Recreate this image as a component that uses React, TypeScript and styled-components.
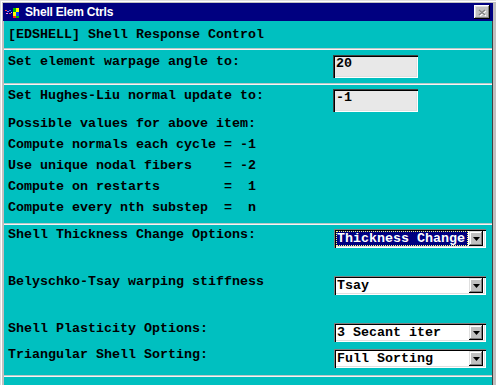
import React from 'react';
import styled, { createGlobalStyle } from 'styled-components';

const GlobalStyle = createGlobalStyle`
  html, body {
    margin: 0;
    padding: 0;
    background: #c0c0c0;
  }
  body {
    font-family: "Liberation Mono", monospace;
  }
`;

const Window = styled.div`
  width: 496px;
  height: 385px;
  box-sizing: border-box;
  padding: 3px 3px 0 3px;
  background: #c0c0c0;
  box-shadow: inset 1px 1px #dfdfdf, inset 2px 2px #ffffff;
  display: flex;
  flex-direction: column;
  overflow: hidden;
`;

const TitleBar = styled.div`
  height: 18px;
  flex: none;
  background: #000080;
  display: flex;
  align-items: center;
  padding-left: 2px;
  gap: 6px;
`;

const Title = styled.span`
  color: #ffffff;
  font: bold 12px "Liberation Sans", Arial, sans-serif;
  letter-spacing: -0.2px;
`;

const CloseButton = styled.div`
  margin-left: auto;
  margin-right: 3px;
  width: 16px;
  height: 14px;
  box-sizing: border-box;
  background: #c0c0c0;
  box-shadow: inset -1px -1px #000000, inset 1px 1px #ffffff,
    inset -2px -2px #808080, inset 2px 2px #dfdfdf;
  display: flex;
  align-items: center;
  justify-content: center;
`;

const Panel = styled.div`
  flex: 1;
  background: #00c0c0;
  color: #000000;
  border-left: 1px solid #c0c0c0;
  border-right: 1px solid #404040;
  display: flex;
  flex-direction: column;
`;

const Section = styled.div<{ $pt: number; $pb: number }>`
  padding: ${(p) => p.$pt}px 4px ${(p) => p.$pb}px 4px;
`;

const Divider = styled.div`
  flex: none;
  border-top: 1px solid #b8c8c8;
  border-bottom: 1px solid #f4f4f4;
`;

const Row = styled.div<{ $h: number }>`
  display: grid;
  grid-template-columns: 325px 1fr;
  align-items: start;
  height: ${(p) => p.$h}px;
`;

const Label = styled.div<{ $shift?: number }>`
  font: bold 13.33px/16px "Liberation Mono", monospace;
  white-space: pre;
  margin-top: ${(p) => p.$shift ?? 0}px;
`;

const InfoBlock = styled.div`
  padding-top: 1px;
`;

const InfoLine = styled.div`
  font: bold 13.33px/21px "Liberation Mono", monospace;
  white-space: pre;
`;

const TextBox = styled.div`
  width: 85px;
  height: 23px;
  box-sizing: border-box;
  padding: 3px 0 0 3px;
  background: #e8e8e8;
  box-shadow: inset 1px 1px #404040, inset 2px 2px #000000,
    inset -1px -1px #ffffff, inset -2px -2px #dfdfdf;
  font: bold 13.33px/12px "Liberation Mono", monospace;
`;

const Combo = styled.div`
  width: 152px;
  height: 19px;
  margin-left: 1px;
  box-sizing: border-box;
  padding: 2px;
  background: #ffffff;
  box-shadow: inset 1px 1px #808080, inset 2px 2px #000000,
    inset -1px -1px #ffffff, inset -2px -2px #dfdfdf;
  display: flex;
  align-items: stretch;
`;

const ComboText = styled.div<{ $selected?: boolean }>`
  flex: 1;
  margin: 0 1px 0 0;
  padding-left: 1px;
  font: bold 13.33px/15px "Liberation Mono", monospace;
  white-space: pre;
  overflow: hidden;
  color: ${(p) => (p.$selected ? '#ffffff' : '#000000')};
  background: ${(p) => (p.$selected ? '#000080' : 'transparent')};
  outline: ${(p) => (p.$selected ? '1px dotted #ffff80' : 'none')};
  outline-offset: -1px;
`;

const ArrowButton = styled.div`
  width: 14px;
  flex: none;
  margin-right: 1px;
  background: #c0c0c0;
  box-shadow: inset -1px -1px #000000, inset 1px 1px #dfdfdf,
    inset -2px -2px #808080, inset 2px 2px #ffffff;
  display: flex;
  align-items: center;
  justify-content: center;
`;

const Arrow = () => (
  <svg width="7" height="4" viewBox="0 0 7 4">
    <path d="M0 0h7L3.5 4z" fill="#000" />
  </svg>
);

const AppIcon = () => (
  <svg width="14" height="11" viewBox="0 0 14 11" shapeRendering="crispEdges">
    <rect x="0" y="3" width="2" height="1" fill="#ff4040" />
    <rect x="2" y="4" width="2" height="1" fill="#8080ff" />
    <rect x="1" y="6" width="2" height="1" fill="#ff80ff" />
    <rect x="4" y="3" width="2" height="1" fill="#4060ff" />
    <rect x="4" y="6" width="2" height="1" fill="#ff4040" />
    <rect x="6" y="5" width="1" height="1" fill="#c0c0ff" />
    <rect x="8" y="1" width="3" height="4" fill="#00c000" />
    <rect x="11" y="1" width="3" height="4" fill="#ffff00" />
    <rect x="8" y="5" width="3" height="4" fill="#ffff00" />
    <rect x="11" y="5" width="3" height="4" fill="#0040ff" />
    <rect x="8" y="9" width="3" height="2" fill="#ff2020" />
    <rect x="11" y="9" width="3" height="2" fill="#00c000" />
  </svg>
);

const CloseIcon = () => (
  <svg width="10" height="9" viewBox="0 0 10 9">
    <path d="M2 2l6 5M8 2l-6 5" stroke="#ffffff" strokeWidth="1.6" transform="translate(0.8 0.8)" />
    <path d="M2 2l6 5M8 2l-6 5" stroke="#808080" strokeWidth="1.6" />
  </svg>
);

interface ISelectProps {
  value: string;
  selected?: boolean;
}

function Select({ value, selected }: ISelectProps) {
  return (
    <Combo>
      <ComboText $selected={selected}>{value}</ComboText>
      <ArrowButton>
        <Arrow />
      </ArrowButton>
    </Combo>
  );
}

const info = [
  'Possible values for above item:',
  'Compute normals each cycle = -1',
  'Use unique nodal fibers    = -2',
  'Compute on restarts        =  1',
  'Compute every nth substep  =  n',
];

function App() {
  return (
    <>
      <GlobalStyle />
      <Window>
        <TitleBar>
          <AppIcon />
          <Title>Shell Elem Ctrls</Title>
          <CloseButton>
            <CloseIcon />
          </CloseButton>
        </TitleBar>
        <Panel>
          <Section $pt={6} $pb={5}>
            <Label>[EDSHELL] Shell Response Control</Label>
          </Section>
          <Divider />
          <Section $pt={5} $pb={5}>
            <Row $h={23}>
              <Label $shift={-1}>Set element warpage angle to:</Label>
              <TextBox>20</TextBox>
            </Row>
          </Section>
          <Divider />
          <Section $pt={4} $pb={5}>
            <Row $h={23}>
              <Label $shift={-1}>Set Hughes-Liu normal update to:</Label>
              <TextBox>-1</TextBox>
            </Row>
            <InfoBlock>
              {info.map((line) => (
                <InfoLine key={line}>{line}</InfoLine>
              ))}
            </InfoBlock>
          </Section>
          <Divider />
          <Section $pt={4} $pb={6}>
            <Row $h={47}>
              <Label $shift={-2}>Shell Thickness Change Options:</Label>
              <Select value="Thickness Change" selected />
            </Row>
            <Row $h={47}>
              <Label $shift={-2}>Belyschko-Tsay warping stiffness</Label>
              <Select value="Tsay" />
            </Row>
            <Row $h={26}>
              <Label $shift={-2}>Shell Plasticity Options:</Label>
              <Select value="3 Secant iter" />
            </Row>
            <Row $h={20}>
              <Label $shift={-2}>Triangular Shell Sorting:</Label>
              <Select value="Full Sorting" />
            </Row>
          </Section>
          <Divider />
        </Panel>
      </Window>
    </>
  );
}

export default App;
